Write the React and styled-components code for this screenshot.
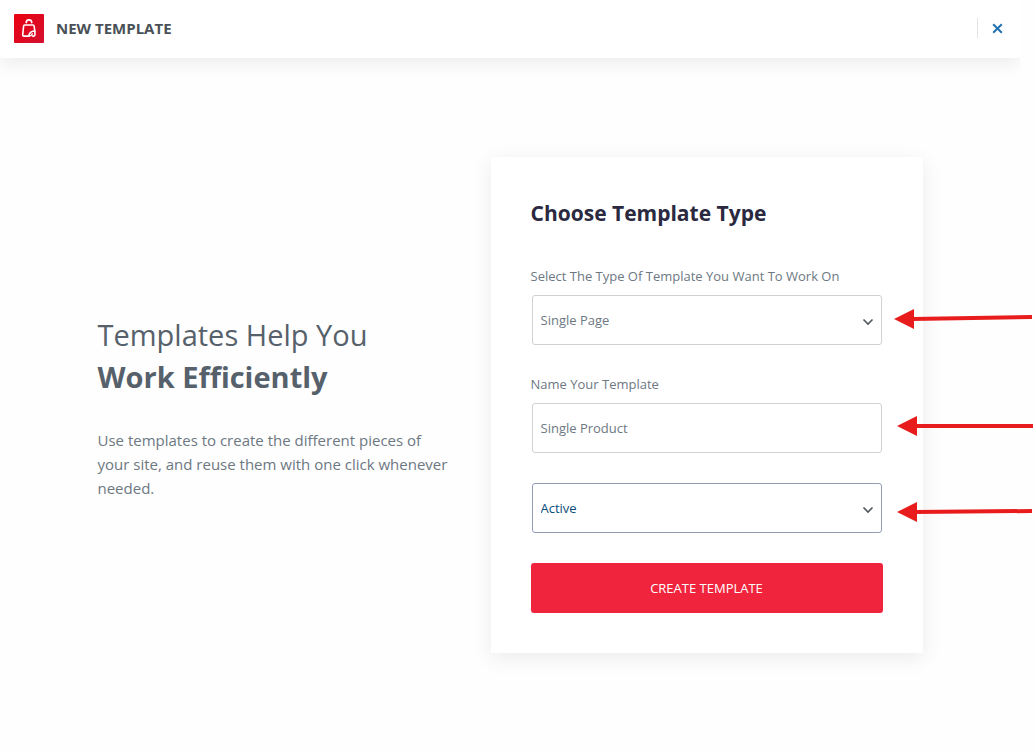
import React from "react";
import styled, { createGlobalStyle } from "styled-components";

const GlobalStyle = createGlobalStyle`
  * { box-sizing: border-box; }
  body {
    margin: 0;
    background: #fefefe;
    color: #6d7882;
    font-family: "Open Sans", "Noto Sans", sans-serif;
    overflow-x: hidden;
  }
  h1, h2, p { margin: 0; }
`;

const Page = styled.div`
  min-height: 100vh;
  padding-right: 14px;
`;

const Header = styled.header`
  display: flex;
  align-items: center;
  gap: 12px;
  height: 58px;
  padding: 0 0 2px 14px;
  background: #fff;
  box-shadow: 0 6px 16px rgba(0, 0, 0, 0.07);
  clip-path: inset(0 0 -30px 0);
`;

const HeaderTitle = styled.h1`
  flex: 1;
  color: #495157;
  font-size: 15px;
  line-height: 20px;
  font-weight: 700;
  text-transform: uppercase;
`;

const CloseButton = styled.button`
  display: flex;
  align-items: center;
  justify-content: center;
  width: 43px;
  height: 20px;
  padding: 0 4px 0 0;
  border: 0;
  border-left: 1px solid #e3e4e6;
  background: none;
  color: #2271b1;
  cursor: pointer;
`;

const Main = styled.main`
  display: grid;
  grid-template-columns: minmax(0, 1fr) 432px;
  align-items: center;
  max-width: 825px;
  margin: 99px auto;
`;

const Intro = styled.section`
  display: grid;
  gap: 30px;
  max-width: 356px;
  padding-top: 4px;
`;

const IntroTitle = styled.h2`
  color: #56616b;
  font-size: 29px;
  line-height: 42px;
  font-weight: 500;
`;

const Strong = styled.strong`
  display: block;
  font-weight: 700;
`;

const IntroText = styled.p`
  font-size: 15px;
  line-height: 24px;
`;

const Card = styled.form`
  display: grid;
  gap: 30px;
  padding: 40px;
  background: #fff;
  box-shadow: 0 5px 20px rgba(0, 0, 0, 0.08);
`;

const CardTitle = styled.h2`
  margin-bottom: 8px;
  color: #2a2940;
  font-size: 21px;
  line-height: 32px;
  font-weight: 700;
`;

const Field = styled.div`
  display: grid;
  gap: 10px;
`;

const Label = styled.label`
  font-size: 13px;
  line-height: 18px;
`;

const Control = styled.div`
  position: relative;
  margin: 0 1px;

  input,
  select {
    display: block;
    width: 100%;
    height: 50px;
    padding: 0 8px;
    border: 1px solid ${(p) => (p.$active ? "#929db3" : "#cfd1d3")};
    border-radius: 3px;
    outline: none;
    appearance: none;
    background: #fff;
    color: ${(p) => (p.$active ? "#0a4b78" : "#6d7882")};
    font-family: inherit;
    font-size: 13px;
  }

  input::placeholder {
    color: inherit;
    opacity: 1;
  }
`;

const Chevron = styled.svg`
  position: absolute;
  top: 21px;
  right: 7px;
  pointer-events: none;
`;

const Pointer = styled.svg`
  position: absolute;
  top: 13px;
  left: calc(100% + ${(p) => p.$gap}px);
  pointer-events: none;
`;

const SubmitButton = styled.button`
  height: 50px;
  border: 0;
  border-radius: 3px;
  background: #f0243c;
  color: #fff;
  font-family: inherit;
  font-size: 13px;
  text-transform: uppercase;
  cursor: pointer;
`;

function Logo() {
  return (
    <svg width="30" height="29" viewBox="0 0 30 29" aria-hidden="true">
      <defs>
        <linearGradient id="logo-red" x1="0" y1="0" x2="1" y2="1">
          <stop offset="0" stopColor="#ea0210" />
          <stop offset="1" stopColor="#d4102f" />
        </linearGradient>
      </defs>
      <rect width="30" height="29" rx="1" fill="url(#logo-red)" />
      <g fill="none" stroke="#fff" strokeWidth="1.6" strokeLinecap="round" strokeLinejoin="round">
        <path d="M12.2 8.6C12.4 5 17.6 5 17.8 8.6" />
        <path d="M15 22.1H9.8Q8.6 22.1 8.7 20.9L9.6 12Q9.7 11 10.7 11H19Q20 11 20.1 12L20.8 17" />
        <path d="M15 22.1C14.7 19.2 17.4 16.8 20.8 17L21 20.6Q21 22.1 19.6 22.1H18.6" />
        <path d="M15.4 21.8C17 21.8 18.2 20.8 18.2 19.4" strokeWidth="1.2" />
      </g>
    </svg>
  );
}

function DropChevron() {
  return (
    <Chevron width="14" height="12" viewBox="0 0 14 12" aria-hidden="true">
      <path d="M2.5 3.5L7 8L11.5 3.5" fill="none" stroke="#50575e" strokeWidth="1.6" />
    </Chevron>
  );
}

function Arrow({ gap, length, tip, tail }) {
  return (
    <Pointer $gap={gap} width={length} height="28" viewBox={`0 0 ${length} 28`} aria-hidden="true">
      <path d={`M18 ${tip}L${length} ${tail}`} stroke="#e81c1c" strokeWidth="4" />
      <path d={`M0 ${tip}L20 ${tip - 10}V${tip + 10}Z`} fill="#e81c1c" />
    </Pointer>
  );
}

export default function App() {
  return (
    <>
      <GlobalStyle />
      <Page>
        <Header>
          <Logo />
          <HeaderTitle>New Template</HeaderTitle>
          <CloseButton type="button" aria-label="Close">
            <svg width="11" height="11" viewBox="0 0 11 11" aria-hidden="true">
              <path d="M1.2 1.2L9.8 9.8M9.8 1.2L1.2 9.8" stroke="currentColor" strokeWidth="2" />
            </svg>
          </CloseButton>
        </Header>
        <Main>
          <Intro>
            <IntroTitle>
              Templates Help You <Strong>Work Efficiently</Strong>
            </IntroTitle>
            <IntroText>
              Use templates to create the different pieces of your site, and reuse them with one
              click whenever needed.
            </IntroText>
          </Intro>
          <Card onSubmit={(e) => e.preventDefault()}>
            <CardTitle>Choose Template Type</CardTitle>
            <Field>
              <Label htmlFor="type">Select The Type Of Template You Want To Work On</Label>
              <Control>
                <select id="type">
                  <option>Single Page</option>
                </select>
                <DropChevron />
                <Arrow gap={12} length={138} tip={11} tail={9} />
              </Control>
            </Field>
            <Field>
              <Label htmlFor="name">Name Your Template</Label>
              <Control>
                <input id="name" type="text" placeholder="Single Product" />
                <Arrow gap={15} length={136} tip={10} tail={10} />
              </Control>
            </Field>
            <Control $active>
              <select aria-label="Status">
                <option>Active</option>
              </select>
              <DropChevron />
              <Arrow gap={15} length={135} tip={16} tail={15} />
            </Control>
            <SubmitButton type="submit">Create Template</SubmitButton>
          </Card>
        </Main>
      </Page>
    </>
  );
}
